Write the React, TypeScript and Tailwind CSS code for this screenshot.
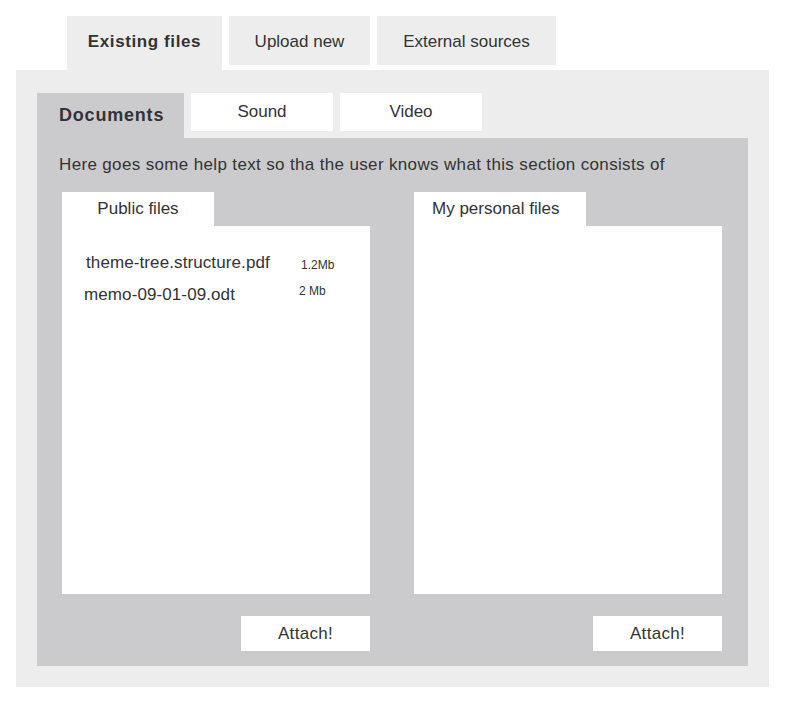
import { useState } from "react";

const topTabs = ["Existing files", "Upload new", "External sources"];
const mediaTabs = ["Documents", "Sound", "Video"];

const publicFiles = [
    { name: "theme-tree.structure.pdf", size: "1.2Mb", indent: "pl-[24px]", sizeOffset: "mt-[2px]" },
    { name: "memo-09-01-09.odt", size: "2 Mb", indent: "pl-[22px]", sizeOffset: "-mt-[4px]" },
];

type FileItem = (typeof publicFiles)[number];

const FilePanel = ({
    title,
    tabClass,
    files,
}: {
    title: string;
    tabClass: string;
    files: FileItem[];
}) => (
    <div className="flex w-[308px] flex-col">
        <div className={`flex h-[34px] items-center bg-white text-[17px] ${tabClass}`}>
            {title}
        </div>
        <div className="flex h-[368px] flex-col gap-[8px] bg-white pt-[26px]">
            {files.map((f) => (
                <div key={f.name} className={`flex items-start ${f.indent}`}>
                    <span className="w-[215px] shrink-0 text-[17px] leading-[22px] tracking-[0.1px]">
                        {f.name}
                    </span>
                    <span className={`text-[12px] leading-[22px] ${f.sizeOffset}`}>{f.size}</span>
                </div>
            ))}
        </div>
        <div className="flex justify-end pt-[22px]">
            <button
                type="button"
                className="h-[35px] w-[129px] bg-white text-[17px] tracking-[0.3px] text-[#333]"
            >
                Attach!
            </button>
        </div>
    </div>
);

export default function App() {
    const [top, setTop] = useState(0);
    const [media, setMedia] = useState(0);

    return (
        <div
            className="min-h-[702px] bg-white pl-[16px] pt-[16px] text-[#333]"
            style={{ fontFamily: '"Liberation Sans", Arial, sans-serif' }}
        >
            <div className="flex items-start gap-[7px] pl-[51px]">
                {topTabs.map((t, i) => (
                    <button
                        key={t}
                        type="button"
                        onClick={() => setTop(i)}
                        className={`flex items-start justify-center bg-[#ededed] pt-[13px] text-[17px] ${
                            i === top
                                ? "h-[54px] font-bold tracking-[0.6px]"
                                : "h-[49px]"
                        } ${i === 0 ? "w-[155px]" : i === 1 ? "w-[141px]" : "w-[179px]"}`}
                    >
                        {t}
                    </button>
                ))}
            </div>

            <div className="w-[753px] bg-[#ededed] px-[21px] pb-[21px] pt-[23px]">
                <div className="flex items-start gap-[7px]">
                    {mediaTabs.map((t, i) => (
                        <button
                            key={t}
                            type="button"
                            onClick={() => setMedia(i)}
                            className={`flex items-center text-[17px] ${
                                i === media
                                    ? "h-[45px] w-[147px] bg-[#cbcbcd] pl-[22px] text-[18px] font-bold tracking-[0.8px]"
                                    : "h-[38px] w-[142px] justify-center bg-white"
                            }`}
                        >
                            {t}
                        </button>
                    ))}
                </div>

                <div className="h-[528px] bg-[#cbcbcd] pl-[25px] pr-[26px] pt-[16px]">
                    <p className="-ml-[3px] text-[17px] leading-[22px] tracking-[0.35px]">
                        Here goes some help text so tha the user knows what this section consists of
                    </p>
                    <div className="mt-[16px] flex justify-between">
                        <FilePanel
                            title="Public files"
                            tabClass="w-[152px] justify-center"
                            files={publicFiles}
                        />
                        <FilePanel
                            title="My personal files"
                            tabClass="w-[172px] pl-[18px]"
                            files={[]}
                        />
                    </div>
                </div>
            </div>
        </div>
    );
}
